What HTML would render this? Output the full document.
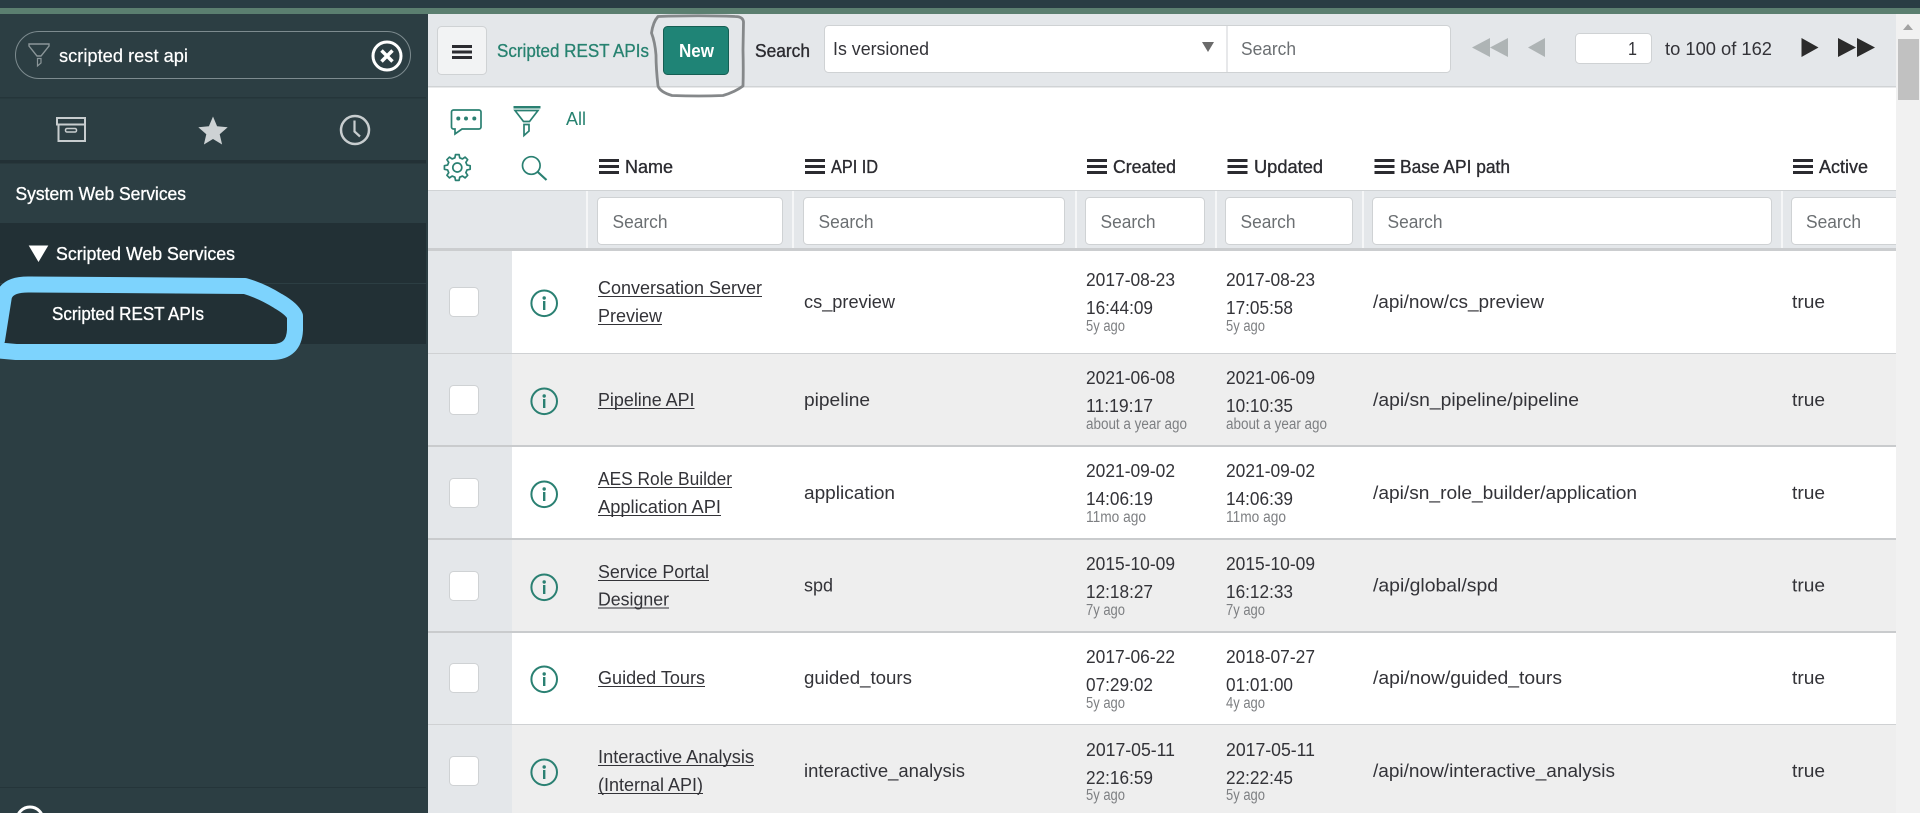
<!DOCTYPE html>
<html lang="en">
<head>
<meta charset="utf-8">
<title>Scripted REST APIs</title>
<style>
html,body{margin:0;padding:0;width:1920px;height:813px;overflow:hidden;background:#fff}
svg{display:block;font-family:"Liberation Sans",sans-serif}
.t{font-size:18.5px;fill:#333338}
.s{font-size:15.5px;fill:#7d7f82}
.p{font-size:18.5px;fill:#6b6f72}
.h{font-size:18.5px;fill:#2b2b30;stroke:#2b2b30;stroke-width:.35px}
.w{font-size:18.5px;fill:#fff;stroke:#fff;stroke-width:.35px}
.g{font-size:18.5px;fill:#278270;stroke:#278270;stroke-width:.3px}
.i{fill:#fff;stroke:#cfd2d4;stroke-width:1}
.c{fill:none;stroke:#2a8072;stroke-width:2}
.f{fill:none;stroke:#2a8072;stroke-width:1.7}
.d{fill:#2a8072}
</style>
</head>
<body>
<svg width="1920" height="813" viewBox="0 0 1920 813" xmlns="http://www.w3.org/2000/svg">
<!-- page frame -->
<rect width="1920" height="813" fill="#fff"/>
<rect x="0" y="0" width="1920" height="8" fill="#293d44"/>
<rect x="0" y="8" width="1920" height="6" fill="#5b7f70"/>

<!-- sidebar -->
<rect x="0" y="14" width="428" height="799" fill="#2c3e43"/>
<rect x="15.5" y="31.5" width="395" height="47" rx="23.5" fill="none" stroke="#7d8b8f" stroke-width="1"/>
<path d="M29 44H49V46L41 56H37L29 46Z" fill="none" stroke="#8b9699" stroke-width="1.4"/>
<path d="M37.500 58.500H41V63L37.500 66Z" fill="none" stroke="#8b9699" stroke-width="1.2"/>
<text x="59" y="62" class="w" textLength="129" lengthAdjust="spacingAndGlyphs" style="stroke-width:.2px">scripted rest api</text>
<circle cx="387" cy="56" r="14" fill="none" stroke="#fff" stroke-width="3"/>
<path d="M381.500 50.500L392.500 61.500M392.500 50.500L381.500 61.500" stroke="#fff" stroke-width="3.500" fill="none"/>
<rect x="0" y="97" width="426" height="1.500" fill="#25353a"/>
<!-- archive -->
<rect x="57" y="118" width="28" height="6.500" fill="none" stroke="#c8cdcf" stroke-width="2"/>
<path d="M58.500 124.500V141H85V124.500" fill="none" stroke="#c8cdcf" stroke-width="2"/>
<rect x="65.500" y="128.500" width="11" height="3.500" rx="1.500" fill="none" stroke="#c8cdcf" stroke-width="1.500"/>
<!-- star -->
<path d="M213 116.500L217.100 126.300L227.700 127.200L219.700 134.200L222.100 144.500L213 139L203.900 144.500L206.300 134.200L198.300 127.200L208.900 126.300Z" fill="#cdd2d4"/>
<!-- clock -->
<circle cx="355" cy="130" r="14" fill="none" stroke="#c8cdcf" stroke-width="2.500"/>
<path d="M354.500 120.500V131.500L360 136.500" fill="none" stroke="#c8cdcf" stroke-width="2.200"/>
<rect x="0" y="160" width="426" height="3.500" fill="#233136"/>
<text x="15.500" y="200" class="w" textLength="170.500" lengthAdjust="spacingAndGlyphs">System Web Services</text>
<rect x="0" y="223" width="426" height="121" fill="#223035"/>
<rect x="0" y="283" width="426" height="1" fill="#2c3e43"/>
<path d="M28.700 245.500H48.300L38.500 262Z" fill="#fff"/>
<text x="56" y="260" class="w" textLength="179" lengthAdjust="spacingAndGlyphs">Scripted Web Services</text>
<path d="M-6 350L16 352L272 352Q294 352 295 330L295 316Q292 309 278 301Q262 291 245 286L30 284.500Q8 284 4 296L-3 340Z" fill="none" stroke="#7dd3fd" stroke-width="16" stroke-linejoin="round"/>
<text x="52" y="320" class="w" textLength="152" lengthAdjust="spacingAndGlyphs">Scripted REST APIs</text>
<rect x="0" y="787" width="426" height="1" fill="#25353a"/>
<circle cx="30" cy="820" r="13" fill="none" stroke="#fff" stroke-width="3"/>

<!-- list header -->
<rect x="428" y="14" width="1468" height="73" fill="#e4e7ea"/>
<rect x="428" y="86" width="1468" height="1.500" fill="#d0d3d5"/>
<rect x="437.500" y="26.500" width="49" height="48" rx="4" fill="#f2f3f4" stroke="#cfd2d4"/>
<rect x="452" y="45" width="20" height="3" fill="#2b2b30"/>
<rect x="452" y="50.500" width="20" height="3" fill="#2b2b30"/>
<rect x="452" y="56" width="20" height="3" fill="#2b2b30"/>
<text x="497" y="57" class="g" textLength="152" lengthAdjust="spacingAndGlyphs">Scripted REST APIs</text>
<rect x="663.500" y="26.500" width="65" height="48" rx="4" fill="#1f8476" stroke="#155e53"/>
<text x="679" y="57" font-size="18.500" font-weight="700" fill="#fff" textLength="35" lengthAdjust="spacingAndGlyphs">New</text>
<path d="M658 16.500Q700 15 735 16.500Q743 16.500 743.500 22L743 50Q743.500 70 743 86Q735 92 723 95.500Q700 96.500 672 95.500Q660 92 658 86Q656 68 656 55Q655 42 651.500 33Q653 22 658 16.500Z" fill="none" stroke="#85888a" stroke-width="2.800" stroke-linejoin="round"/>
<text x="755" y="57" class="h" textLength="55" lengthAdjust="spacingAndGlyphs">Search</text>
<rect x="824.500" y="25.500" width="626" height="47" rx="4" fill="#fff" stroke="#cfd2d4"/>
<text x="833" y="55" class="t" textLength="96" lengthAdjust="spacingAndGlyphs">Is versioned</text>
<path d="M1202 42H1214L1208 52Z" fill="#6b6b6b"/>
<rect x="1226.500" y="26" width="1" height="46" fill="#cfd2d4"/>
<text x="1241" y="55" class="p" textLength="55" lengthAdjust="spacingAndGlyphs">Search</text>
<!-- pagination -->
<path d="M1472 47.500L1490 38V57ZM1490 47.500L1508 38V57Z" fill="#aeb4b5"/>
<path d="M1528 47.500L1545 38V57Z" fill="#aeb4b5"/>
<rect x="1575.500" y="33.500" width="76" height="30" rx="4" fill="#fff" stroke="#cfd2d4"/>
<text x="1628" y="55" class="t" textLength="9" lengthAdjust="spacingAndGlyphs">1</text>
<text x="1665" y="55" class="t" textLength="107" lengthAdjust="spacingAndGlyphs">to 100 of 162</text>
<path d="M1818.500 47.500L1801.500 38V57Z" fill="#2b2b2b"/>
<path d="M1856 47.500L1838 38V57ZM1875 47.500L1857 38V57Z" fill="#2b2b2b"/>

<!-- toolbar icons -->
<path d="M454 110H479A2 2 0 0 1 481 112V127A2 2 0 0 1 479 129H462L455 134V129H453.500A2 2 0 0 1 451.500 127V112A2 2 0 0 1 453.500 110Z" class="f"/>
<circle cx="458.300" cy="118.500" r="2" class="d"/>
<circle cx="466" cy="118.500" r="2" class="d"/>
<circle cx="474.300" cy="118.500" r="2" class="d"/>
<rect x="513.500" y="106" width="27" height="2.500" class="d"/>
<path d="M515 110.500H538L529.500 121.500H523.500Z" class="f"/>
<path d="M524 124.500H529V131L524 135.500Z" class="f"/>
<text x="566" y="125" font-size="18.500" fill="#278270" textLength="20" lengthAdjust="spacingAndGlyphs">All</text>
<g transform="translate(457.300 167.500)">
<path d="M-2.420 -9.700L-1.810 -12.870L1.810 -12.870L2.420 -9.700L5.150 -8.570L7.820 -10.380L10.380 -7.820L8.570 -5.150L9.700 -2.420L12.870 -1.810L12.870 1.810L9.700 2.420L8.570 5.150L10.380 7.820L7.820 10.380L5.150 8.570L2.420 9.700L1.810 12.870L-1.810 12.870L-2.420 9.700L-5.150 8.570L-7.820 10.380L-10.380 7.820L-8.570 5.150L-9.700 2.420L-12.870 1.810L-12.870 -1.810L-9.700 -2.420L-8.570 -5.150L-10.380 -7.820L-7.820 -10.380L-5.150 -8.570Z" class="f" stroke-linejoin="round"/>
<circle cx="0" cy="0" r="4.500" class="f"/>
</g>
<circle cx="531.300" cy="165.500" r="8.800" class="f"/>
<path d="M537.800 172L546.500 180" class="c" style="stroke-width:2.200"/>

<!-- column headers -->
<path d="M599 159h20v3h-20zM599 165h20v3h-20zM599 171h20v3h-20z" fill="#2b2b30"/>
<text x="625" y="173" class="h" textLength="48" lengthAdjust="spacingAndGlyphs">Name</text>
<path d="M805 159h20v3h-20zM805 165h20v3h-20zM805 171h20v3h-20z" fill="#2b2b30"/>
<text x="831" y="173" class="h" textLength="47" lengthAdjust="spacingAndGlyphs">API ID</text>
<path d="M1087 159h20v3h-20zM1087 165h20v3h-20zM1087 171h20v3h-20z" fill="#2b2b30"/>
<text x="1113" y="173" class="h" textLength="63" lengthAdjust="spacingAndGlyphs">Created</text>
<path d="M1227.500 159h20v3h-20zM1227.500 165h20v3h-20zM1227.500 171h20v3h-20z" fill="#2b2b30"/>
<text x="1254" y="173" class="h" textLength="69" lengthAdjust="spacingAndGlyphs">Updated</text>
<path d="M1374.500 159h20v3h-20zM1374.500 165h20v3h-20zM1374.500 171h20v3h-20z" fill="#2b2b30"/>
<text x="1400" y="173" class="h" textLength="110" lengthAdjust="spacingAndGlyphs">Base API path</text>
<path d="M1793 159h20v3h-20zM1793 165h20v3h-20zM1793 171h20v3h-20z" fill="#2b2b30"/>
<text x="1819" y="173" class="h" textLength="49" lengthAdjust="spacingAndGlyphs">Active</text>

<!-- filter row -->
<rect x="428" y="190" width="1468" height="1" fill="#d0d3d5"/>
<rect x="428" y="191" width="1468" height="57" fill="#e4e7ea"/>
<rect x="586" y="191" width="2" height="57" fill="#f5f6f7"/>
<rect x="792" y="191" width="2" height="57" fill="#f5f6f7"/>
<rect x="1075" y="191" width="2" height="57" fill="#f5f6f7"/>
<rect x="1215" y="191" width="2" height="57" fill="#f5f6f7"/>
<rect x="1362" y="191" width="2" height="57" fill="#f5f6f7"/>
<rect x="1781" y="191" width="2" height="57" fill="#f5f6f7"/>
<rect x="597.500" y="197.500" width="185" height="47" rx="4" class="i"/>
<rect x="803.500" y="197.500" width="261" height="47" rx="4" class="i"/>
<rect x="1085.500" y="197.500" width="119" height="47" rx="4" class="i"/>
<rect x="1225.500" y="197.500" width="127" height="47" rx="4" class="i"/>
<rect x="1372.500" y="197.500" width="399" height="47" rx="4" class="i"/>
<rect x="1791.500" y="197.500" width="120" height="47" rx="4" class="i"/>
<text x="612.500" y="228" class="p" textLength="55" lengthAdjust="spacingAndGlyphs">Search</text>
<text x="818.500" y="228" class="p" textLength="55" lengthAdjust="spacingAndGlyphs">Search</text>
<text x="1100.500" y="228" class="p" textLength="55" lengthAdjust="spacingAndGlyphs">Search</text>
<text x="1240.500" y="228" class="p" textLength="55" lengthAdjust="spacingAndGlyphs">Search</text>
<text x="1387.500" y="228" class="p" textLength="55" lengthAdjust="spacingAndGlyphs">Search</text>
<text x="1806" y="228" class="p" textLength="55" lengthAdjust="spacingAndGlyphs">Search</text>
<rect x="428" y="248" width="1468" height="3" fill="#cbcdcf"/>

<!-- row backgrounds -->
<rect x="428" y="354" width="1468" height="91" fill="#eeeeee"/>
<rect x="428" y="540" width="1468" height="91" fill="#eeeeee"/>
<rect x="428" y="725" width="1468" height="88" fill="#eeeeee"/>
<rect x="428" y="251" width="84" height="562" fill="#e4e7ea"/>
<rect x="428" y="353" width="1468" height="1" fill="#cfd1d3"/>
<rect x="428" y="445" width="1468" height="2" fill="#c9cbcd"/>
<rect x="428" y="538" width="1468" height="2" fill="#c9cbcd"/>
<rect x="428" y="631" width="1468" height="2" fill="#c9cbcd"/>
<rect x="428" y="724" width="1468" height="1" fill="#cfd1d3"/>

<!-- checkboxes -->
<rect x="449.500" y="287.500" width="29" height="29" rx="4" class="i"/>
<rect x="449.500" y="385.500" width="29" height="29" rx="4" class="i"/>
<rect x="449.500" y="478.500" width="29" height="29" rx="4" class="i"/>
<rect x="449.500" y="571.500" width="29" height="29" rx="4" class="i"/>
<rect x="449.500" y="663.500" width="29" height="29" rx="4" class="i"/>
<rect x="449.500" y="756.500" width="29" height="29" rx="4" class="i"/>

<!-- info icons -->
<g><circle cx="544.200" cy="303.300" r="12.800" class="c"/><circle cx="544.200" cy="298" r="1.700" class="d"/><rect x="543" y="301" width="2.400" height="9" class="d"/></g>
<g><circle cx="544.200" cy="401.300" r="12.800" class="c"/><circle cx="544.200" cy="396" r="1.700" class="d"/><rect x="543" y="399" width="2.400" height="9" class="d"/></g>
<g><circle cx="544.200" cy="494.300" r="12.800" class="c"/><circle cx="544.200" cy="489" r="1.700" class="d"/><rect x="543" y="492" width="2.400" height="9" class="d"/></g>
<g><circle cx="544.200" cy="587.300" r="12.800" class="c"/><circle cx="544.200" cy="582" r="1.700" class="d"/><rect x="543" y="585" width="2.400" height="9" class="d"/></g>
<g><circle cx="544.200" cy="679.300" r="12.800" class="c"/><circle cx="544.200" cy="674" r="1.700" class="d"/><rect x="543" y="677" width="2.400" height="9" class="d"/></g>
<g><circle cx="544.200" cy="772.300" r="12.800" class="c"/><circle cx="544.200" cy="767" r="1.700" class="d"/><rect x="543" y="770" width="2.400" height="9" class="d"/></g>

<!-- names -->
<text x="598" y="294" class="t" textLength="164" lengthAdjust="spacingAndGlyphs">Conversation Server</text><rect x="598" y="296" width="164" height="1" fill="#333338"/>
<text x="598" y="322" class="t" textLength="64" lengthAdjust="spacingAndGlyphs">Preview</text><rect x="598" y="324" width="64" height="1" fill="#333338"/>
<text x="598" y="406" class="t" textLength="96.500" lengthAdjust="spacingAndGlyphs">Pipeline API</text><rect x="598" y="408" width="96.500" height="1" fill="#333338"/>
<text x="598" y="485" class="t" textLength="134" lengthAdjust="spacingAndGlyphs">AES Role Builder</text><rect x="598" y="487" width="134" height="1" fill="#333338"/>
<text x="598" y="513" class="t" textLength="123" lengthAdjust="spacingAndGlyphs">Application API</text><rect x="598" y="515" width="123" height="1" fill="#333338"/>
<text x="598" y="578" class="t" textLength="111" lengthAdjust="spacingAndGlyphs">Service Portal</text><rect x="598" y="580" width="111" height="1" fill="#333338"/>
<text x="598" y="605.500" class="t" textLength="71" lengthAdjust="spacingAndGlyphs">Designer</text><rect x="598" y="607.500" width="71" height="1" fill="#333338"/>
<text x="598" y="684" class="t" textLength="107" lengthAdjust="spacingAndGlyphs">Guided Tours</text><rect x="598" y="686" width="107" height="1" fill="#333338"/>
<text x="598" y="763" class="t" textLength="156" lengthAdjust="spacingAndGlyphs">Interactive Analysis</text><rect x="598" y="765" width="156" height="1" fill="#333338"/>
<text x="598" y="791" class="t" textLength="105" lengthAdjust="spacingAndGlyphs">(Internal API)</text><rect x="598" y="793" width="105" height="1" fill="#333338"/>

<!-- API IDs -->
<text x="804" y="308" class="t" textLength="91" lengthAdjust="spacingAndGlyphs">cs_preview</text>
<text x="804" y="406" class="t" textLength="66" lengthAdjust="spacingAndGlyphs">pipeline</text>
<text x="804" y="499" class="t" textLength="91" lengthAdjust="spacingAndGlyphs">application</text>
<text x="804" y="591.500" class="t" textLength="29" lengthAdjust="spacingAndGlyphs">spd</text>
<text x="804" y="684" class="t" textLength="108" lengthAdjust="spacingAndGlyphs">guided_tours</text>
<text x="804" y="777" class="t" textLength="161" lengthAdjust="spacingAndGlyphs">interactive_analysis</text>

<!-- created -->
<text x="1086" y="286" class="t" textLength="89" lengthAdjust="spacingAndGlyphs">2017-08-23</text>
<text x="1086" y="314" class="t" textLength="67" lengthAdjust="spacingAndGlyphs">16:44:09</text>
<text x="1086" y="331" class="s" textLength="39" lengthAdjust="spacingAndGlyphs">5y ago</text>
<text x="1086" y="384" class="t" textLength="89" lengthAdjust="spacingAndGlyphs">2021-06-08</text>
<text x="1086" y="412" class="t" textLength="67" lengthAdjust="spacingAndGlyphs">11:19:17</text>
<text x="1086" y="429" class="s" textLength="101" lengthAdjust="spacingAndGlyphs">about a year ago</text>
<text x="1086" y="477" class="t" textLength="89" lengthAdjust="spacingAndGlyphs">2021-09-02</text>
<text x="1086" y="505" class="t" textLength="67" lengthAdjust="spacingAndGlyphs">14:06:19</text>
<text x="1086" y="522" class="s" textLength="60" lengthAdjust="spacingAndGlyphs">11mo ago</text>
<text x="1086" y="570" class="t" textLength="89" lengthAdjust="spacingAndGlyphs">2015-10-09</text>
<text x="1086" y="598" class="t" textLength="67" lengthAdjust="spacingAndGlyphs">12:18:27</text>
<text x="1086" y="615" class="s" textLength="39" lengthAdjust="spacingAndGlyphs">7y ago</text>
<text x="1086" y="663" class="t" textLength="89" lengthAdjust="spacingAndGlyphs">2017-06-22</text>
<text x="1086" y="691" class="t" textLength="67" lengthAdjust="spacingAndGlyphs">07:29:02</text>
<text x="1086" y="708" class="s" textLength="39" lengthAdjust="spacingAndGlyphs">5y ago</text>
<text x="1086" y="756" class="t" textLength="89" lengthAdjust="spacingAndGlyphs">2017-05-11</text>
<text x="1086" y="784" class="t" textLength="67" lengthAdjust="spacingAndGlyphs">22:16:59</text>
<text x="1086" y="800" class="s" textLength="39" lengthAdjust="spacingAndGlyphs">5y ago</text>

<!-- updated -->
<text x="1226" y="286" class="t" textLength="89" lengthAdjust="spacingAndGlyphs">2017-08-23</text>
<text x="1226" y="314" class="t" textLength="67" lengthAdjust="spacingAndGlyphs">17:05:58</text>
<text x="1226" y="331" class="s" textLength="39" lengthAdjust="spacingAndGlyphs">5y ago</text>
<text x="1226" y="384" class="t" textLength="89" lengthAdjust="spacingAndGlyphs">2021-06-09</text>
<text x="1226" y="412" class="t" textLength="67" lengthAdjust="spacingAndGlyphs">10:10:35</text>
<text x="1226" y="429" class="s" textLength="101" lengthAdjust="spacingAndGlyphs">about a year ago</text>
<text x="1226" y="477" class="t" textLength="89" lengthAdjust="spacingAndGlyphs">2021-09-02</text>
<text x="1226" y="505" class="t" textLength="67" lengthAdjust="spacingAndGlyphs">14:06:39</text>
<text x="1226" y="522" class="s" textLength="60" lengthAdjust="spacingAndGlyphs">11mo ago</text>
<text x="1226" y="570" class="t" textLength="89" lengthAdjust="spacingAndGlyphs">2015-10-09</text>
<text x="1226" y="598" class="t" textLength="67" lengthAdjust="spacingAndGlyphs">16:12:33</text>
<text x="1226" y="615" class="s" textLength="39" lengthAdjust="spacingAndGlyphs">7y ago</text>
<text x="1226" y="663" class="t" textLength="89" lengthAdjust="spacingAndGlyphs">2018-07-27</text>
<text x="1226" y="691" class="t" textLength="67" lengthAdjust="spacingAndGlyphs">01:01:00</text>
<text x="1226" y="708" class="s" textLength="39" lengthAdjust="spacingAndGlyphs">4y ago</text>
<text x="1226" y="756" class="t" textLength="89" lengthAdjust="spacingAndGlyphs">2017-05-11</text>
<text x="1226" y="784" class="t" textLength="67" lengthAdjust="spacingAndGlyphs">22:22:45</text>
<text x="1226" y="800" class="s" textLength="39" lengthAdjust="spacingAndGlyphs">5y ago</text>

<!-- base path -->
<text x="1373" y="308" class="t" textLength="171" lengthAdjust="spacingAndGlyphs">/api/now/cs_preview</text>
<text x="1373" y="406" class="t" textLength="206" lengthAdjust="spacingAndGlyphs">/api/sn_pipeline/pipeline</text>
<text x="1373" y="499" class="t" textLength="264" lengthAdjust="spacingAndGlyphs">/api/sn_role_builder/application</text>
<text x="1373" y="591.500" class="t" textLength="125" lengthAdjust="spacingAndGlyphs">/api/global/spd</text>
<text x="1373" y="684" class="t" textLength="189" lengthAdjust="spacingAndGlyphs">/api/now/guided_tours</text>
<text x="1373" y="777" class="t" textLength="242" lengthAdjust="spacingAndGlyphs">/api/now/interactive_analysis</text>

<!-- active -->
<text x="1792" y="308" class="t" textLength="33" lengthAdjust="spacingAndGlyphs">true</text>
<text x="1792" y="406" class="t" textLength="33" lengthAdjust="spacingAndGlyphs">true</text>
<text x="1792" y="499" class="t" textLength="33" lengthAdjust="spacingAndGlyphs">true</text>
<text x="1792" y="591.500" class="t" textLength="33" lengthAdjust="spacingAndGlyphs">true</text>
<text x="1792" y="684" class="t" textLength="33" lengthAdjust="spacingAndGlyphs">true</text>
<text x="1792" y="777" class="t" textLength="33" lengthAdjust="spacingAndGlyphs">true</text>

<!-- scrollbar -->
<rect x="1896" y="14" width="24" height="799" fill="#f1f1f1"/>
<path d="M1908 24L1913 30H1903Z" fill="#a3a3a3"/>
<rect x="1898" y="39" width="21" height="61" fill="#c1c1c1"/>
</svg>
</body>
</html>
